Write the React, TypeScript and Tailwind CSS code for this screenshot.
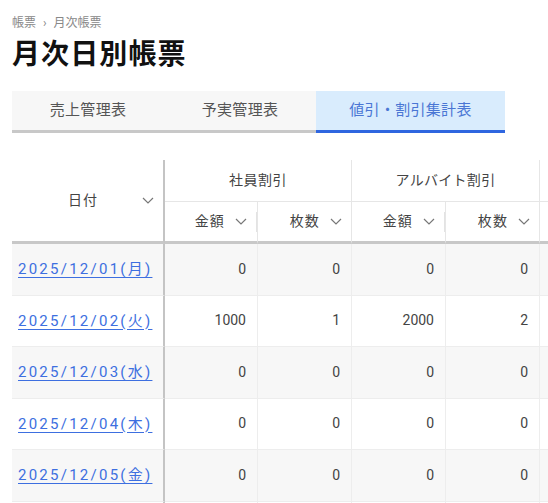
import React from 'react'

type Row = {
  date: string
  staffAmount: number
  staffCount: number
  partAmount: number
  partCount: number
}

const rows: Row[] = [
  { date: '2025/12/01(月)', staffAmount: 0, staffCount: 0, partAmount: 0, partCount: 0 },
  { date: '2025/12/02(火)', staffAmount: 1000, staffCount: 1, partAmount: 2000, partCount: 2 },
  { date: '2025/12/03(水)', staffAmount: 0, staffCount: 0, partAmount: 0, partCount: 0 },
  { date: '2025/12/04(木)', staffAmount: 0, staffCount: 0, partAmount: 0, partCount: 0 },
  { date: '2025/12/05(金)', staffAmount: 0, staffCount: 0, partAmount: 0, partCount: 0 },
  { date: '2025/12/06(土)', staffAmount: 0, staffCount: 0, partAmount: 0, partCount: 0 },
  { date: '2025/12/07(日)', staffAmount: 0, staffCount: 0, partAmount: 0, partCount: 0 },
]

const tabs = [
  { label: '売上管理表', active: false },
  { label: '予実管理表', active: false },
  { label: '値引・割引集計表', active: true },
]

function Chevron() {
  return (
    <svg width="12" height="7" viewBox="0 0 12 7" className="shrink-0">
      <polyline points="1,1 6,6 11,1" fill="none" stroke="#777" strokeWidth="1.2" />
    </svg>
  )
}

function SubHeader({ label, divider }: { label: string; divider: boolean }) {
  return (
    <th className="h-[42px] border-b-[3px] border-r border-[#e6e6e6] border-b-[#c8c8c8] p-0 font-normal">
      <div
        className={`flex h-[20px] items-center justify-end gap-[10px] pr-[9px] ${
          divider ? 'border-r border-[#e3e3e3]' : ''
        }`}
      >
        <span className="tracking-[0.08em]">{label}</span>
        <Chevron />
      </div>
    </th>
  )
}

function NumCell({ value, last }: { value: number; last?: boolean }) {
  return (
    <td
      className={`border-b border-[#ededed] pr-[11px] text-right ${
        last ? 'border-r-0' : 'border-r'
      }`}
    >
      {value}
    </td>
  )
}

export default function App() {
  return (
    <div
      className="min-h-screen bg-white pl-3 text-[#333]"
      style={{ fontFamily: 'Roboto, "Noto Sans CJK JP", sans-serif' }}
    >
      {/* Header */}
      <div className="pt-[14px] text-[12px] leading-[18px] text-[#888]">
        帳票 <span className="mx-1">›</span> 月次帳票
      </div>
      <h1 className="mt-[3px] text-[28px] font-bold leading-[40px] tracking-[0.04em] text-[#111]">
        月次日別帳票
      </h1>

      {/* Tabs */}
      <div className="mt-[16px] flex">
        {tabs.map((tab) => (
          <div
            key={tab.label}
            className={`flex h-[42px] items-center justify-center border-b-[3px] text-[15px] tracking-[0.02em] ${
              tab.active
                ? 'w-[189px] border-[#2f66e0] bg-[#d9ecfd] text-[#4a76d4]'
                : 'w-[152px] border-[#c8c8c8] bg-[#f7f7f7] text-[#555]'
            }`}
          >
            {tab.label}
          </div>
        ))}
      </div>

      {/* Table */}
      <div className="mt-[27px] overflow-hidden">
        <table className="w-[810px] table-fixed border-separate border-spacing-0 text-[14px] text-[#444]">
          <colgroup>
            <col className="w-[153px]" />
            <col className="w-[93px]" />
            <col className="w-[94px]" />
            <col className="w-[94px]" />
            <col className="w-[94px]" />
            <col className="w-[94px]" />
            <col className="w-[94px]" />
            <col className="w-[94px]" />
          </colgroup>
          <thead>
            <tr>
              <th
                rowSpan={2}
                className="border-b-[3px] border-r-2 border-b-[#c8c8c8] border-r-[#c4c4c4] p-0 font-normal"
              >
                <div className="flex items-center">
                  <span className="flex-1" />
                  <span className="tracking-[0.08em]">日付</span>
                  <span className="flex flex-1 justify-end pr-[9px]">
                    <Chevron />
                  </span>
                </div>
              </th>
              <th colSpan={2} className="h-[42px] border-b border-r border-[#e6e6e6] font-normal tracking-[0.04em]">
                社員割引
              </th>
              <th colSpan={2} className="h-[42px] border-b border-r border-[#e6e6e6] font-normal tracking-[0.02em]">
                アルバイト割引
              </th>
              <th colSpan={2} className="h-[42px] border-b border-r border-[#e6e6e6] font-normal tracking-[0.02em]">
                クーポン割引
              </th>
              <th className="h-[42px] border-b border-[#e6e6e6] font-normal">合計</th>
            </tr>
            <tr>
              <SubHeader label="金額" divider />
              <SubHeader label="枚数" divider={false} />
              <SubHeader label="金額" divider />
              <SubHeader label="枚数" divider={false} />
              <SubHeader label="金額" divider />
              <SubHeader label="枚数" divider={false} />
              <SubHeader label="金額" divider={false} />
            </tr>
          </thead>
          <tbody>
            {rows.map((row, i) => (
              <tr key={row.date} className={i % 2 === 0 ? 'bg-[#f7f7f7]' : 'bg-white'}>
                <td className="h-[51.5px] border-b border-r-2 border-b-[#ededed] border-r-[#c4c4c4] pl-[6px]">
                  <a
                    href="#"
                    className="text-[15px] tracking-[0.15em] text-[#3d6fe0] underline underline-offset-[3px]"
                  >
                    {row.date}
                  </a>
                </td>
                <td className="border-b border-r border-[#ededed] pr-[11px] text-right">{row.staffAmount}</td>
                <NumCell value={row.staffCount} />
                <NumCell value={row.partAmount} />
                <NumCell value={row.partCount} />
                <NumCell value={0} />
                <NumCell value={0} />
                <NumCell value={row.staffAmount + row.partAmount} last />
              </tr>
            ))}
          </tbody>
        </table>
      </div>
    </div>
  )
}
